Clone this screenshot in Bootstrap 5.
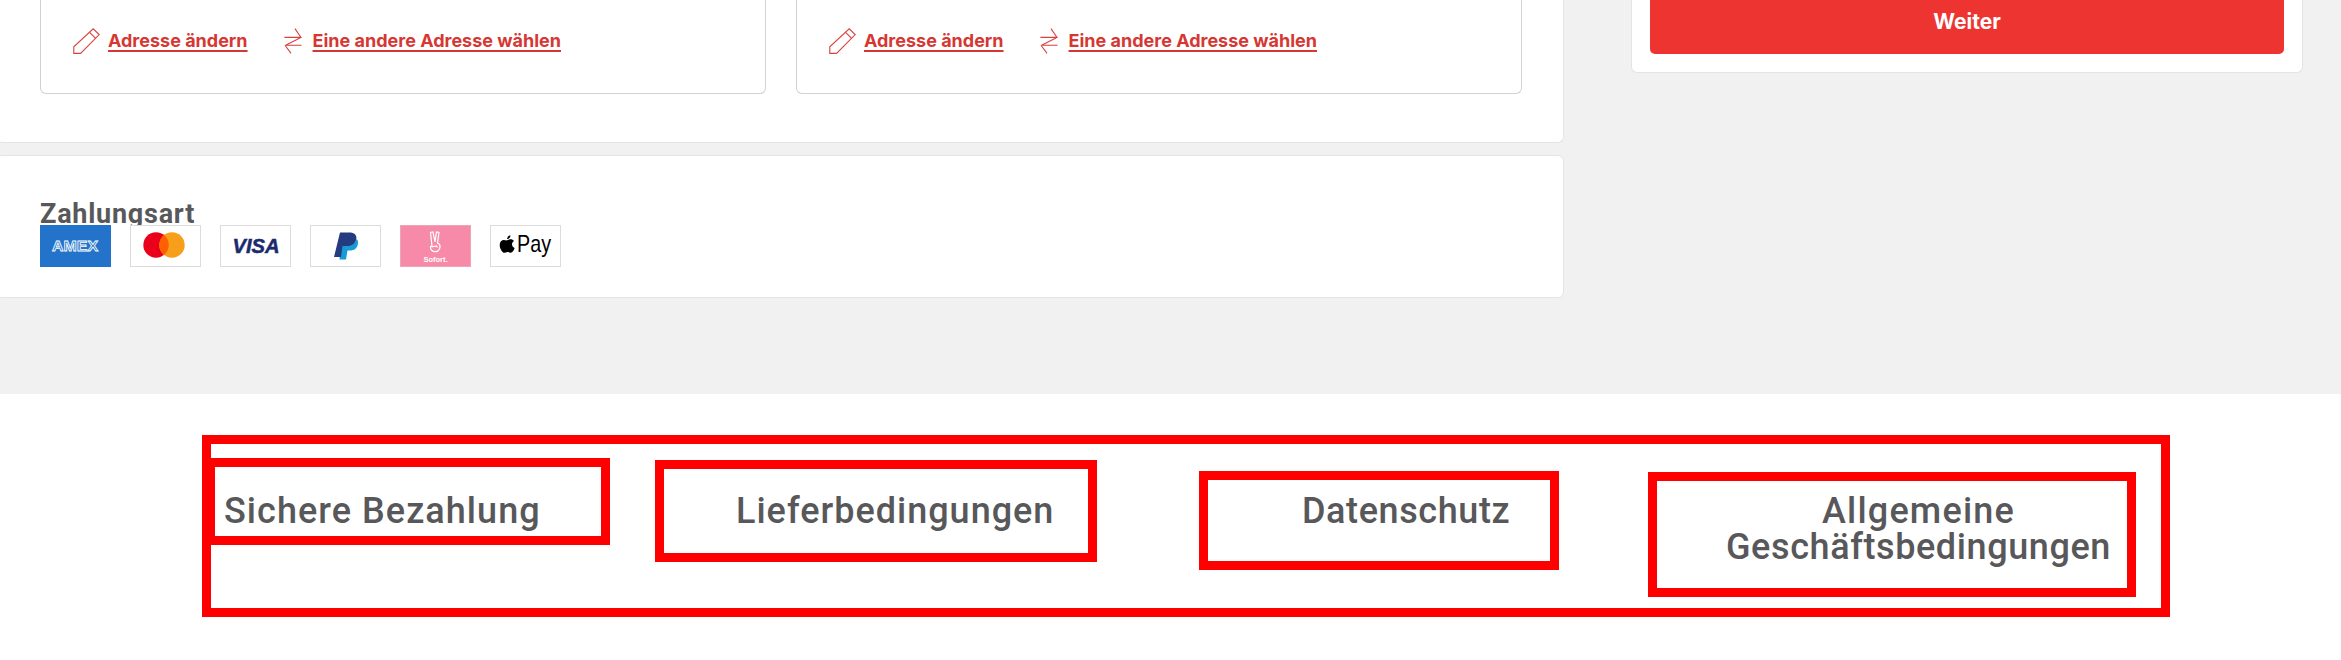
<!DOCTYPE html>
<html lang="de">
<head>
  <meta charset="UTF-8">
  <title>Checkout</title>
  <meta name="viewport" content="width=device-width, initial-scale=1">
  <link rel="stylesheet" href="https://cdn.jsdelivr.net/npm/bootstrap@5.3.0/dist/css/bootstrap.min.css">
  <style>
    html, body { height: 660px; overflow: hidden; }
    body { background-color: #f1f1f1; font-family: "Inter", "Liberation Sans", sans-serif; }

    /* top area */
    .checkout-area { height: 394px; }
    .main-col { width: 1568px; margin-left: -4px; flex: none; }
    .side-col { width: 672px; margin-left: 67px; flex: none; }

    .sheet { background: #fff; border: 1px solid #e4e4e4; border-radius: 6px; }
    .sheet-address { height: 143px; padding-left: 43px; gap: 30px; border-top: 0; border-top-left-radius: 0; border-top-right-radius: 0; }
    .sheet-payment { height: 143px; margin-top: 12px; padding: 45px 0 0 43px; }

    .address-box { width: 726px; height: 94px; padding: 28px 0 0 32px; background: #fff; border: 1px solid #d2d2d2; border-top: 0; border-radius: 0 0 6px 6px; }
    .addr-link { color: #d63733; font-size: 18px; font-weight: 700; line-height: 26px; text-decoration: underline; text-decoration-thickness: 2px; text-underline-offset: 3px; white-space: nowrap; }
    .addr-link:hover { color: #c92f2b; }
    .addr-icon { flex: none; display: block; }
    .addr-swap { margin: 0 11px 0 36px; }

    .pay-title { height: 24px; overflow: hidden; margin: 0; font-family: "Roboto", sans-serif; font-size: 27px; font-weight: 700; line-height: 26px; letter-spacing: .75px; color: #58585a; }
    .pay-logos { gap: 19px; }
    .pay-logo { display: block; width: 71px; height: 42px; }

    .side-sheet { height: 73px; padding: 0 18px; border-top: 0; border-top-left-radius: 0; border-top-right-radius: 0; }
    .btn-weiter { display: block; width: 100%; height: 54px; padding: 9px 0 0; border: 0; border-radius: 0 0 5px 5px; background: #ee3431; color: #fff; font-size: 21px; font-weight: 700; line-height: 26px; text-align: center; }
    .btn-weiter:hover { background: #d92d2a; color: #fff; }

    /* footer */
    .foot-area { height: 266px; background: #fff; padding: 41px 0 0 202px; }
    .foot-frame { width: 1968px; height: 182px; border: 9px solid #f00; }
    .foot-item { flex: none; border: 9px solid #f00; color: #58585a; font-family: "Roboto", sans-serif; font-size: 36px; font-weight: 500; line-height: 35.5px; letter-spacing: .6px; text-decoration: none; white-space: nowrap; }
    .foot-pay { width: 404px; height: 87px; margin: 14px 0 0 -5px; padding: 27px 0 0 9px; letter-spacing: 1.05px; }
    .foot-delivery { width: 442px; height: 102px; margin: 16px 0 0 45px; padding: 25px 0 0 72px; letter-spacing: 1px; }
    .foot-privacy { width: 360px; height: 99px; margin: 27px 0 0 102px; padding: 14px 0 0 94px; }
    .foot-terms { width: 488px; height: 125px; margin: 28px 0 0 89px; padding: 13px 0 0 69px; }
    .foot-terms span { display: block; width: fit-content; text-align: center; }
    .foot-terms em { font-style: normal; letter-spacing: 1.2px; }
  </style>
</head>
<body>
  <div class="checkout-area d-flex align-items-start">
    <div class="main-col">
      <div class="sheet sheet-address d-flex align-items-start">
        <div class="address-box d-flex align-items-start">
          <svg class="addr-icon" width="27" height="26" viewBox="0 0 27 26" fill="none" stroke="#d8423e" stroke-width="1.1"><path d="M.8 25.4V18.8L20.2.8 26.2 6.6 7.6 25.4Z"/><path d="M16.6 4.4 22.6 10.4"/></svg>
          <a class="addr-link ms-2" href="#">Adresse ändern</a>
          <svg class="addr-icon addr-swap" width="18" height="26" viewBox="0 0 18 26" fill="none" stroke="#d8423e" stroke-width="1.1"><path d="M11 .6 17 9.4H.4M16.4 9.8 1.6 17.2H17.6M1 17.2 7 25.4"/></svg>
          <a class="addr-link" href="#">Eine andere Adresse wählen</a>
        </div>
        <div class="address-box d-flex align-items-start">
          <svg class="addr-icon" width="27" height="26" viewBox="0 0 27 26" fill="none" stroke="#d8423e" stroke-width="1.1"><path d="M.8 25.4V18.8L20.2.8 26.2 6.6 7.6 25.4Z"/><path d="M16.6 4.4 22.6 10.4"/></svg>
          <a class="addr-link ms-2" href="#">Adresse ändern</a>
          <svg class="addr-icon addr-swap" width="18" height="26" viewBox="0 0 18 26" fill="none" stroke="#d8423e" stroke-width="1.1"><path d="M11 .6 17 9.4H.4M16.4 9.8 1.6 17.2H17.6M1 17.2 7 25.4"/></svg>
          <a class="addr-link" href="#">Eine andere Adresse wählen</a>
        </div>
      </div>
      <div class="sheet sheet-payment">
        <h2 class="pay-title">Zahlungsart</h2>
        <div class="pay-logos d-flex">
          <!-- amex -->
          <svg class="pay-logo" viewBox="0 0 71 42">
            <rect width="71" height="42" fill="#2273c9"/>
            <text x="35" y="26" text-anchor="middle" font-family="Liberation Sans" font-size="15" font-weight="700" fill="#2273c9" stroke="#fff" stroke-width=".8" textLength="46" lengthAdjust="spacingAndGlyphs">AMEX</text>
          </svg>
          <!-- mastercard -->
          <svg class="pay-logo" viewBox="0 0 71 42">
            <rect x=".5" y=".5" width="70" height="41" fill="#fff" stroke="#dcdcdc"/>
            <circle cx="26" cy="20" r="12.7" fill="#eb001b"/>
            <circle cx="42" cy="20" r="12.7" fill="#f79e1b"/>
            <path d="M34 10.1a12.7 12.7 0 0 1 0 19.8 12.7 12.7 0 0 1 0-19.8Z" fill="#ff5f00"/>
          </svg>
          <!-- visa -->
          <svg class="pay-logo" viewBox="0 0 71 42">
            <rect x=".5" y=".5" width="70" height="41" fill="#fff" stroke="#dcdcdc"/>
            <text x="36" y="28" text-anchor="middle" font-family="Liberation Sans" font-size="20" font-weight="700" font-style="italic" fill="#1a2a6c" stroke="#1a2a6c" stroke-width=".5" textLength="47" lengthAdjust="spacingAndGlyphs">VISA</text>
          </svg>
          <!-- paypal -->
          <svg class="pay-logo" viewBox="0 0 71 42">
            <rect x=".5" y=".5" width="70" height="41" fill="#fff" stroke="#dcdcdc"/>
            <path d="M31 20h7c5 0 7.500-2 8.500-6 1.500 1 1.800 2.800 1.400 5-.8 4.500-3.600 6.500-8.100 6.500h-2.300L36 34.500h-6.500Z" fill="#179bd7"/>
            <path d="M30 7.500h9c5 0 8 2.200 7.300 6.500-.8 4.700-4 7-9.300 7h-4.500L31 32h-7Z" fill="#253b80"/>
          </svg>
          <!-- sofort -->
          <svg class="pay-logo" viewBox="0 0 71 42">
            <rect x=".5" y=".5" width="70" height="41" fill="#f78aa8" stroke="#e8a6b8"/>
            <path d="M32 21 30.500 7.500 33 7l2 10 1.500-10 2.500.5L37.500 18c2.500 1 3 3.500 2 6-1 2-3.500 3-5.500 2.500-2.500-.5-4-3-3.500-5Zm-.5 1 5-1 1 1.500" fill="none" stroke="#fff" stroke-width="1.200"/>
            <text x="35.500" y="37" text-anchor="middle" font-family="Liberation Sans" font-size="7.500" font-weight="700" fill="#fff">Sofort.</text>
          </svg>
          <!-- apple pay -->
          <svg class="pay-logo" viewBox="0 0 71 42">
            <rect x=".5" y=".5" width="70" height="41" fill="#fff" stroke="#dcdcdc"/>
            <path transform="translate(-1 -2.500) scale(1.150)" d="M15.600 15.400c1.300 0 2-.9 3.200-.9 1.200 0 2.200.6 2.900 1.500-2.500 1.500-2.100 5 .6 6.100-.6 1.800-2 4.200-3.400 4.200-1.100 0-1.500-.7-2.800-.7s-1.800.7-2.800.7c-1.800 0-4-3.600-4-6.800 0-2.900 1.900-4.200 3.500-4.200 1.100 0 2 .3 2.800.3Zm.2-1c-.1-1.700 1.300-3.300 2.800-3.400.2 1.800-1.300 3.500-2.800 3.400Z" fill="#000"/>
            <text x="27" y="27" font-family="Liberation Sans" font-size="24" fill="#000" textLength="34" lengthAdjust="spacingAndGlyphs">Pay</text>
          </svg>
        </div>
      </div>
    </div>
    <div class="side-col">
      <div class="sheet side-sheet">
        <a class="btn-weiter text-decoration-none" href="#">Weiter</a>
      </div>
    </div>
  </div>

  <footer class="foot-area">
    <div class="foot-frame d-flex align-items-start">
      <a class="foot-item foot-pay" href="#">Sichere Bezahlung</a>
      <a class="foot-item foot-delivery" href="#">Lieferbedingungen</a>
      <a class="foot-item foot-privacy" href="#">Datenschutz</a>
      <a class="foot-item foot-terms" href="#"><span><em>Allgemeine</em><br>Geschäftsbedingungen</span></a>
    </div>
  </footer>
  <script src="https://cdn.jsdelivr.net/npm/bootstrap@5.3.0/dist/js/bootstrap.bundle.min.js"></script>
</body>
</html>
